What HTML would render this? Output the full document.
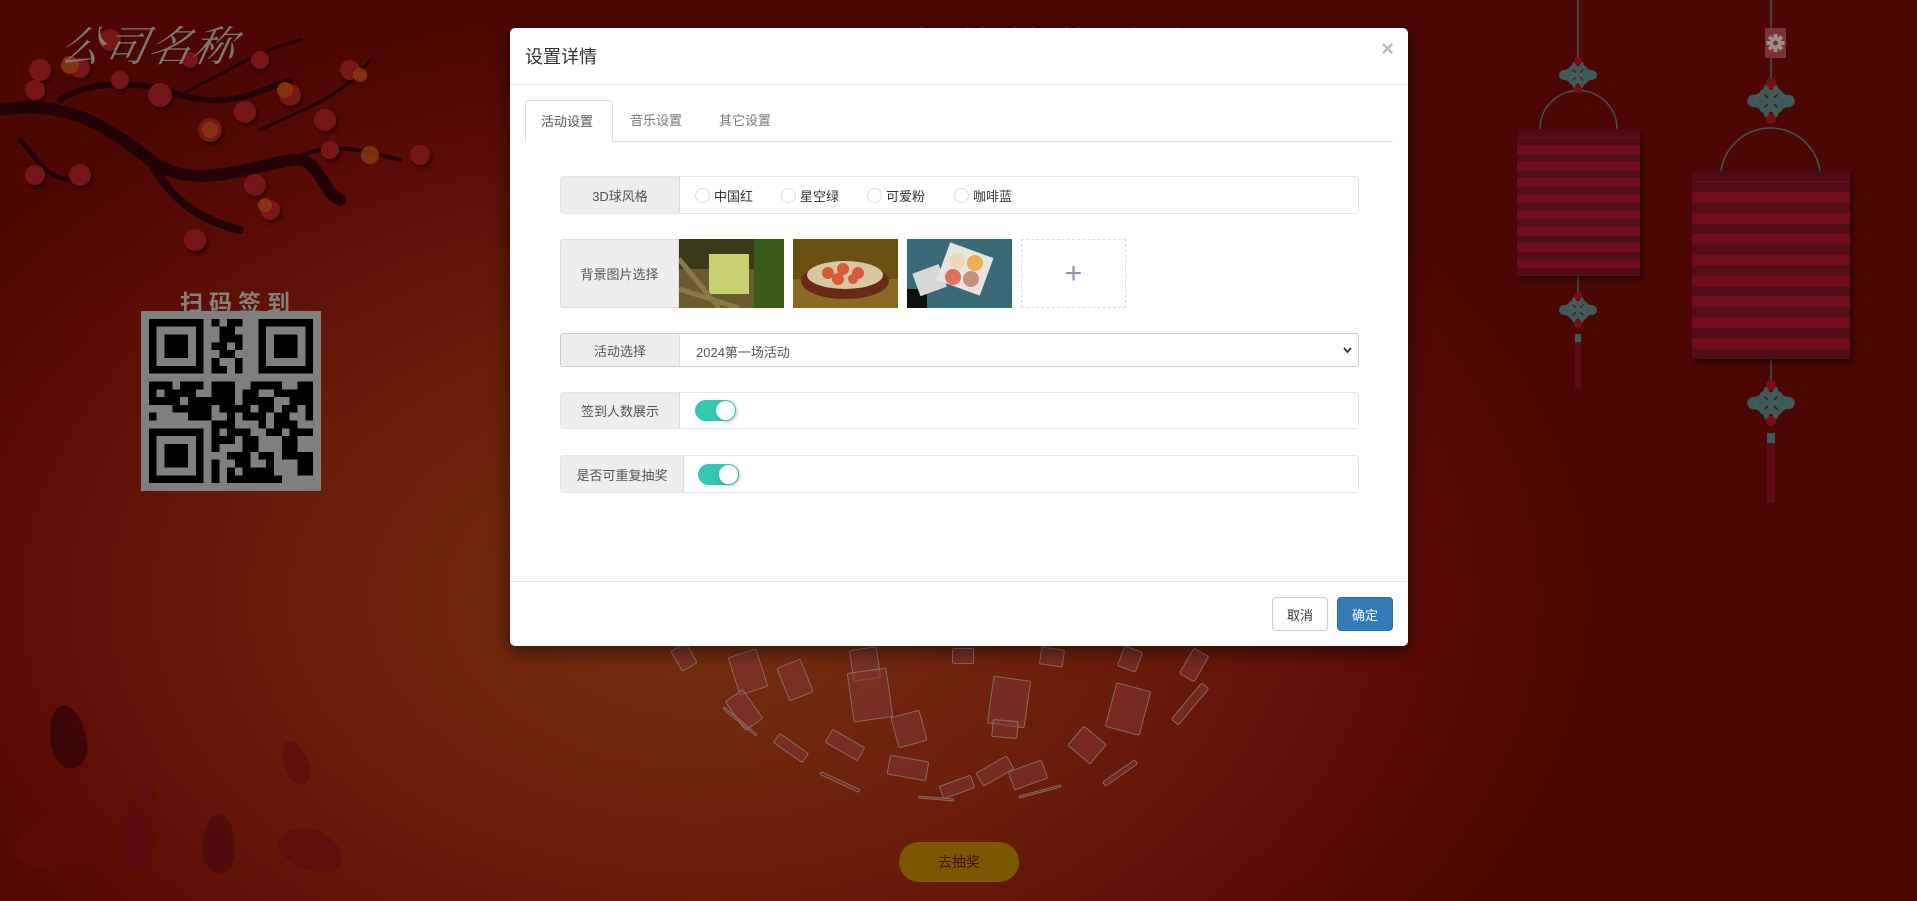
<!DOCTYPE html>
<html><head><meta charset="utf-8">
<style>
*{box-sizing:border-box;margin:0;padding:0}
html,body{width:1917px;height:901px;overflow:hidden}
body{position:relative;font-family:"Liberation Sans","Noto Sans CJK SC",sans-serif;
background:radial-gradient(ellipse 900px 600px at 700px 600px,#74300f 0%,#6a1e0b 45%,#5a0c06 80%,#4c0703 100%);}
.abs{position:absolute}
.company{left:62px;top:14px;font-family:"Liberation Serif","Noto Serif CJK SC",serif;font-style:italic;font-size:42px;color:#7e7870;letter-spacing:2px;transform:skewX(-12deg)}
.scan{left:180px;top:284px;font-size:23px;font-weight:bold;color:#86807a;letter-spacing:6px}
.modal{left:510px;top:28px;width:898px;height:618px;background:#fff;border-radius:5px;box-shadow:0 5px 18px rgba(0,0,0,.55)}
.mtitle{left:15px;top:15px;font-size:18px;color:#333}
.close{right:14px;top:8px;font-size:22px;color:#bbb;font-weight:bold}
.hline{left:0;width:898px;height:1px;background:#e5e5e5}
.tab{top:72px;height:42px;font-size:13px;line-height:41px;color:#777;padding:0 15px}
.tab.act{border:1px solid #ddd;border-bottom-color:#fff;border-radius:4px 4px 0 0;color:#555;background:#fff;z-index:2}
.row{left:50px;width:799px;border:1px solid #e6e6e6;border-radius:3px;background:#fff}
.lab{position:absolute;left:0;top:0;bottom:0;width:119px;background:#eee;border-right:1px solid #ddd;font-size:13px;color:#555;display:flex;align-items:center;justify-content:center;border-radius:3px 0 0 3px}
.radio{position:absolute;top:8px;font-size:13px;color:#333;display:flex;align-items:center}
.radio i{display:inline-block;width:15px;height:15px;border:1px solid #ddd;border-radius:50%;margin-right:4px}
.tog{position:absolute;width:41px;height:21px;border-radius:11px;background:#33c8b6}
.tog b{position:absolute;right:0;top:0;width:21px;height:21px;border-radius:50%;background:#fff;border:1px solid #33c8b6;box-shadow:1px 1px 3px rgba(0,0,0,.25)}
.btn{top:569px;height:34px;width:56px;border-radius:4px;font-size:13px;display:flex;align-items:center;justify-content:center}
.card{position:absolute;background:rgba(130,55,55,.55);border:1px solid rgba(140,160,150,.55);border-radius:2px}
.go{left:899px;top:842px;width:120px;height:40px;border-radius:20px;background:#7a5700;color:#3a1600;font-size:14px;display:flex;align-items:center;justify-content:center}
.petal{position:absolute;border-radius:50% 50% 50% 50%/60% 60% 40% 40%;background:#5a0a0c;opacity:.7}
</style></head><body>

<div class="abs" style="left:910px;top:14px;font-size:40px;color:#5e2a06;letter-spacing:8px">年终抽奖活动</div>

<svg class="abs" style="left:0;top:0" width="460" height="270" viewBox="0 0 460 270">
<defs><filter id="sh"><feDropShadow dx="2" dy="3" stdDeviation="2" flood-color="#000" flood-opacity=".5"/></filter></defs>
<g fill="none" stroke="#220204" stroke-linecap="round">
<path d="M0 110 C60 100 100 120 150 160 C190 190 240 170 290 160 C320 155 320 190 340 200" stroke-width="12"/>
<path d="M150 160 C170 200 200 220 240 230" stroke-width="8"/>
<path d="M60 100 C90 80 140 80 180 95 C230 110 260 90 290 80" stroke-width="6"/>
<path d="M290 160 C330 140 360 150 400 160" stroke-width="4"/>
<path d="M20 140 C40 160 40 175 70 180" stroke-width="5"/>
<path d="M180 95 C230 70 260 50 300 40" stroke-width="3"/>
<path d="M260 130 C300 110 340 100 370 60" stroke-width="3"/>
</g>
<g fill="#761414" filter="url(#sh)">
<circle cx="40" cy="70" r="11"/><circle cx="35" cy="90" r="10"/><circle cx="80" cy="68" r="10"/><circle cx="110" cy="40" r="11"/>
<circle cx="120" cy="80" r="9"/><circle cx="160" cy="95" r="12"/><circle cx="210" cy="130" r="12"/><circle cx="245" cy="112" r="11"/>
<circle cx="255" cy="185" r="11"/><circle cx="270" cy="210" r="10"/><circle cx="195" cy="240" r="11"/><circle cx="80" cy="175" r="11"/>
<circle cx="35" cy="175" r="10"/><circle cx="325" cy="120" r="11"/><circle cx="330" cy="150" r="9"/><circle cx="350" cy="70" r="10"/>
<circle cx="290" cy="95" r="11"/><circle cx="420" cy="155" r="10"/><circle cx="260" cy="60" r="9"/><circle cx="190" cy="60" r="8"/>
</g>
<g fill="#8a3810" opacity=".85">
<circle cx="70" cy="65" r="9"/><circle cx="210" cy="130" r="8"/><circle cx="285" cy="90" r="8"/><circle cx="370" cy="155" r="9"/><circle cx="265" cy="205" r="7"/><circle cx="360" cy="75" r="7"/>
</g>
</svg>

<div class="abs company">公司名称</div>
<div class="abs scan">扫码签到</div>

<svg class="abs" style="left:141px;top:311px" width="180" height="180" viewBox="0 0 23 23" shape-rendering="crispEdges">
<rect width="23" height="23" fill="#7f7f7f"/>
<g fill="#000">
<path d="M1 1h7v7h-7zM2 2v5h5v-5zM3 3h3v3h-3z" fill-rule="evenodd"/>
<path d="M15 1h7v7h-7zM16 2v5h5v-5zM17 3h3v3h-3z" fill-rule="evenodd"/>
<path d="M1 15h7v7h-7zM2 16v5h5v-5zM3 17h3v3h-3z" fill-rule="evenodd"/>
<rect x="9" y="1" width="1" height="1"/><rect x="11" y="1" width="2" height="1"/><rect x="10" y="2" width="2" height="2"/><rect x="12" y="3" width="1" height="2"/>
<rect x="9" y="4" width="2" height="1"/><rect x="10" y="5" width="2" height="1"/><rect x="9" y="6" width="1" height="2"/><rect x="12" y="6" width="1" height="2"/><rect x="10" y="7" width="1" height="1"/>
<rect x="1" y="9" width="3" height="1"/><rect x="5" y="9" width="3" height="1"/><rect x="9" y="9" width="3" height="2"/><rect x="14" y="9" width="4" height="1"/><rect x="20" y="9" width="2" height="1"/>
<rect x="1" y="10" width="1" height="2"/><rect x="3" y="10" width="4" height="1"/><rect x="13" y="10" width="2" height="2"/><rect x="17" y="10" width="5" height="1"/>
<rect x="2" y="11" width="3" height="1"/><rect x="6" y="11" width="6" height="1"/><rect x="15" y="11" width="2" height="2"/><rect x="19" y="11" width="3" height="1"/>
<rect x="4" y="12" width="5" height="1"/><rect x="10" y="12" width="4" height="1"/><rect x="18" y="12" width="2" height="1"/><rect x="21" y="12" width="1" height="2"/>
<rect x="1" y="13" width="1" height="1"/><rect x="6" y="13" width="3" height="1"/><rect x="11" y="13" width="1" height="2"/><rect x="13" y="13" width="3" height="1"/><rect x="17" y="13" width="2" height="1"/>
<rect x="9" y="14" width="2" height="1"/><rect x="15" y="14" width="1" height="1"/><rect x="17" y="14" width="3" height="1"/>
<rect x="9" y="15" width="1" height="3"/><rect x="11" y="15" width="3" height="1"/><rect x="16" y="15" width="2" height="1"/><rect x="19" y="15" width="3" height="1"/>
<rect x="10" y="16" width="2" height="1"/><rect x="13" y="16" width="2" height="2"/><rect x="18" y="16" width="2" height="2"/>
<rect x="11" y="18" width="3" height="1"/><rect x="15" y="18" width="2" height="1"/><rect x="18" y="18" width="4" height="1"/>
<rect x="9" y="19" width="1" height="3"/><rect x="12" y="19" width="2" height="1"/><rect x="16" y="19" width="1" height="1"/><rect x="20" y="19" width="2" height="2"/>
<rect x="11" y="20" width="1" height="2"/><rect x="13" y="20" width="4" height="1"/><rect x="12" y="21" width="6" height="1"/>
</g></svg>

<svg class="abs" style="left:1480px;top:0" width="437" height="520" viewBox="0 0 437 520">
<defs>
<pattern id="s1" width="10" height="16.3" patternUnits="userSpaceOnUse" y="129"><rect width="10" height="9" fill="#720c1c"/><rect y="9" width="10" height="7.3" fill="#520e18"/></pattern>
<pattern id="s2" width="10" height="20.9" patternUnits="userSpaceOnUse" y="171"><rect width="10" height="11" fill="#720c1c"/><rect y="11" width="10" height="9.9" fill="#520e18"/></pattern>
<g id="knot" fill="none" stroke="#3f5a5a" stroke-width="4"><circle cx="-9" cy="0" r="4"/><circle cx="9" cy="0" r="4"/><circle cx="0" cy="-9" r="4"/><circle cx="0" cy="9" r="4"/><circle cx="-4" cy="-4" r="4"/><circle cx="4" cy="4" r="4"/><circle cx="4" cy="-4" r="4"/><circle cx="-4" cy="4" r="4"/><circle cx="-14" cy="0" r="3"/><circle cx="14" cy="0" r="3"/></g>
<filter id="ls"><feDropShadow dx="3" dy="4" stdDeviation="3" flood-color="#000" flood-opacity=".45"/></filter>
</defs>
<g stroke="#3f5656" stroke-width="1.5" fill="none">
<line x1="98" y1="0" x2="98" y2="60"/><path d="M60 129 A38 38 0 0 1 137 129"/><line x1="98" y1="276" x2="98" y2="300"/>
<line x1="291" y1="0" x2="291" y2="80"/><path d="M241 171 A50 50 0 0 1 340 171"/><line x1="291" y1="359" x2="291" y2="385"/>
</g>
<g filter="url(#ls)">
<rect x="37" y="129" width="123" height="147" fill="url(#s1)"/>
<rect x="212" y="171" width="158" height="188" fill="url(#s2)"/>
</g>
<rect x="37" y="129" width="123" height="8" fill="#4e0c14"/>
<rect x="212" y="171" width="158" height="10" fill="#4e0c14"/>
<use href="#knot" x="98" y="75"/><circle cx="98" cy="61" r="4" fill="#7a0c1a"/><circle cx="98" cy="89" r="4" fill="#7a0c1a"/>
<use href="#knot" x="98" y="310"/><circle cx="98" cy="296" r="4" fill="#7a0c1a"/><circle cx="98" cy="324" r="4" fill="#7a0c1a"/>
<rect x="95" y="334" width="6" height="8" fill="#3f5a5a"/><rect x="95" y="342" width="6" height="46" fill="#5e0c14"/>
<use href="#knot" x="291" y="101" transform="translate(291 101) scale(1.25) translate(-291 -101)"/><circle cx="291" cy="83" r="5" fill="#7a0c1a"/><circle cx="291" cy="119" r="5" fill="#7a0c1a"/>
<use href="#knot" x="291" y="403" transform="translate(291 403) scale(1.25) translate(-291 -403)"/><circle cx="291" cy="385" r="5" fill="#7a0c1a"/><circle cx="291" cy="421" r="5" fill="#7a0c1a"/>
<rect x="287" y="433" width="8" height="10" fill="#3f5a5a"/><rect x="287" y="443" width="8" height="60" fill="#5e0c14"/>
<rect x="285" y="28" width="21" height="30" fill="#7a3232"/>
<g transform="translate(295.5 43)" fill="#9a9090"><circle r="6"/><rect x="-2" y="-9" width="4" height="18"/><rect x="-9" y="-2" width="18" height="4"/><rect x="-2" y="-9" width="4" height="18" transform="rotate(45)"/><rect x="-2" y="-9" width="4" height="18" transform="rotate(-45)"/><circle r="2.5" fill="#7a3232"/></g>
</svg>

<div class="petal" style="left:50px;top:705px;width:36px;height:64px;background:#2e0406;transform:rotate(-10deg)"></div>
<div class="petal" style="left:122px;top:782px;width:36px;height:95px;background:#5e0a0e;transform:rotate(10deg)"></div>
<div class="petal" style="left:203px;top:814px;width:32px;height:60px;background:#4a0a0e"></div>
<div class="petal" style="left:284px;top:740px;width:24px;height:45px;background:#5c0a10;transform:rotate(-20deg)"></div>
<div class="petal" style="left:278px;top:830px;width:66px;height:40px;background:#5c0a10;transform:rotate(20deg)"></div>
<div class="petal" style="left:15px;top:820px;width:70px;height:50px;background:#620e10;opacity:.4"></div>

<div class="card" style="left:675px;top:645px;width:18px;height:24px;transform:rotate(-30deg)"></div>
<div class="card" style="left:733px;top:652px;width:30px;height:40px;transform:rotate(-18deg)"></div>
<div class="card" style="left:782px;top:662px;width:26px;height:36px;transform:rotate(-22deg)"></div>
<div class="card" style="left:733px;top:692px;width:22px;height:36px;transform:rotate(-35deg)"></div>
<div class="card" style="left:851px;top:648px;width:28px;height:32px;transform:rotate(-8deg)"></div>
<div class="card" style="left:850px;top:670px;width:40px;height:50px;transform:rotate(-8deg)"></div>
<div class="card" style="left:894px;top:713px;width:30px;height:32px;transform:rotate(-15deg)"></div>
<div class="card" style="left:952px;top:648px;width:22px;height:16px"></div>
<div class="card" style="left:990px;top:678px;width:38px;height:48px;transform:rotate(8deg)"></div>
<div class="card" style="left:992px;top:720px;width:26px;height:18px;transform:rotate(5deg)"></div>
<div class="card" style="left:1040px;top:648px;width:24px;height:18px;transform:rotate(8deg)"></div>
<div class="card" style="left:1110px;top:686px;width:36px;height:46px;transform:rotate(15deg)"></div>
<div class="card" style="left:1072px;top:732px;width:30px;height:26px;transform:rotate(40deg)"></div>
<div class="card" style="left:1120px;top:648px;width:20px;height:22px;transform:rotate(20deg)"></div>
<div class="card" style="left:1185px;top:650px;width:18px;height:30px;transform:rotate(30deg)"></div>
<div class="card" style="left:1185px;top:680px;width:10px;height:48px;transform:rotate(40deg)"></div>
<div class="card" style="left:826px;top:737px;width:38px;height:16px;transform:rotate(30deg)"></div>
<div class="card" style="left:773px;top:742px;width:36px;height:12px;transform:rotate(35deg)"></div>
<div class="card" style="left:888px;top:758px;width:40px;height:20px;transform:rotate(10deg)"></div>
<div class="card" style="left:977px;top:763px;width:36px;height:16px;transform:rotate(-30deg)"></div>
<div class="card" style="left:1010px;top:765px;width:36px;height:20px;transform:rotate(-20deg)"></div>
<div class="card" style="left:940px;top:780px;width:34px;height:14px;transform:rotate(-20deg)"></div>
<div class="card" style="left:1100px;top:770px;width:40px;height:6px;transform:rotate(-35deg)"></div>
<div class="card" style="left:818px;top:780px;width:44px;height:4px;transform:rotate(25deg)"></div>
<div class="card" style="left:718px;top:720px;width:44px;height:3px;transform:rotate(40deg)"></div>
<div class="card" style="left:1018px;top:790px;width:44px;height:3px;transform:rotate(-15deg)"></div>
<div class="card" style="left:918px;top:797px;width:36px;height:3px;transform:rotate(5deg)"></div>

<div class="abs go">去抽奖</div>

<div class="abs modal">
  <div class="abs mtitle">设置详情</div>
  <div class="abs close">×</div>
  <div class="abs hline" style="top:56px"></div>
  <div class="abs" style="left:15px;top:113px;width:868px;height:1px;background:#ddd"></div>
  <div class="abs tab act" style="left:15px;width:88px">活动设置</div>
  <div class="abs tab" style="left:105px">音乐设置</div>
  <div class="abs tab" style="left:194px">其它设置</div>

  <div class="abs row" style="top:148px;height:38px">
    <div class="lab">3D球风格</div>
    <div class="radio" style="left:134px;top:9px"><i></i>中国红</div>
    <div class="radio" style="left:220px;top:9px"><i></i>星空绿</div>
    <div class="radio" style="left:306px;top:9px"><i></i>可爱粉</div>
    <div class="radio" style="left:393px;top:9px"><i></i>咖啡蓝</div>
  </div>

  <div class="abs row" style="top:211px;height:69px;border:none">
    <div class="lab" style="border:1px solid #ddd">背景图片选择</div>
    <svg class="abs" style="left:119px;top:0" width="105" height="69"><rect width="105" height="69" fill="#3a3a18"/><rect x="0" y="30" width="105" height="39" fill="#6a5a30"/><rect x="30" y="15" width="40" height="40" fill="#c8d070"/><rect x="75" y="0" width="30" height="69" fill="#3a5a1a"/><path d="M0 50 L60 69 M0 20 L40 69" stroke="#8a7848" stroke-width="5"/></svg>
    <svg class="abs" style="left:233px;top:0" width="105" height="69"><rect width="105" height="69" fill="#6a5010"/><rect y="40" width="105" height="29" fill="#8a6a20"/><ellipse cx="52" cy="42" rx="44" ry="18" fill="#6a2818"/><ellipse cx="52" cy="36" rx="38" ry="14" fill="#d8c8a0"/><g fill="#d85a3a"><circle cx="35" cy="34" r="6"/><circle cx="50" cy="30" r="6"/><circle cx="65" cy="34" r="6"/><circle cx="45" cy="40" r="6"/><circle cx="60" cy="40" r="5"/></g></svg>
    <svg class="abs" style="left:347px;top:0" width="105" height="69"><rect width="105" height="69" fill="#3a6a78"/><rect x="0" y="50" width="20" height="19" fill="#101010"/><rect x="8" y="30" width="28" height="24" fill="#d8d8d8" transform="rotate(-20 20 40)"/><rect x="35" y="10" width="46" height="40" fill="#e8e4dc" transform="rotate(20 58 30)"/><g><circle cx="50" cy="22" r="8" fill="#e8d8c0"/><circle cx="68" cy="24" r="8" fill="#e8b050"/><circle cx="46" cy="38" r="8" fill="#e07060"/><circle cx="64" cy="40" r="8" fill="#c89080"/></g></svg>
    <div class="abs" style="left:461px;top:0;width:105px;height:69px;border:1px dashed #ddd;display:flex;align-items:center;justify-content:center;font-size:30px;color:#8a96a8;font-weight:300">+</div>
  </div>

  <div class="abs row" style="top:305px;height:34px;border-color:#ccc">
    <div class="lab">活动选择</div>
    <div class="abs" style="left:135px;top:8px;font-size:13px;color:#555">2024第一场活动</div>
    <svg class="abs" style="right:6px;top:12px" width="9" height="8"><path d="M1 2 L4.5 6 L8 2" stroke="#333" stroke-width="1.8" fill="none"/></svg>
  </div>

  <div class="abs row" style="top:364px;height:37px">
    <div class="lab">签到人数展示</div>
    <div class="tog" style="left:134px;top:7px"><b></b></div>
  </div>

  <div class="abs row" style="top:427px;height:38px">
    <div class="lab" style="width:123px">是否可重复抽奖</div>
    <div class="tog" style="left:137px;top:8px"><b></b></div>
  </div>

  <div class="abs hline" style="top:553px"></div>
  <div class="abs btn" style="left:762px;border:1px solid #ccc;color:#333;background:#fff">取消</div>
  <div class="abs btn" style="left:827px;background:#337ab7;border:1px solid #2e6da4;color:#fff">确定</div>
</div>
</body></html>
